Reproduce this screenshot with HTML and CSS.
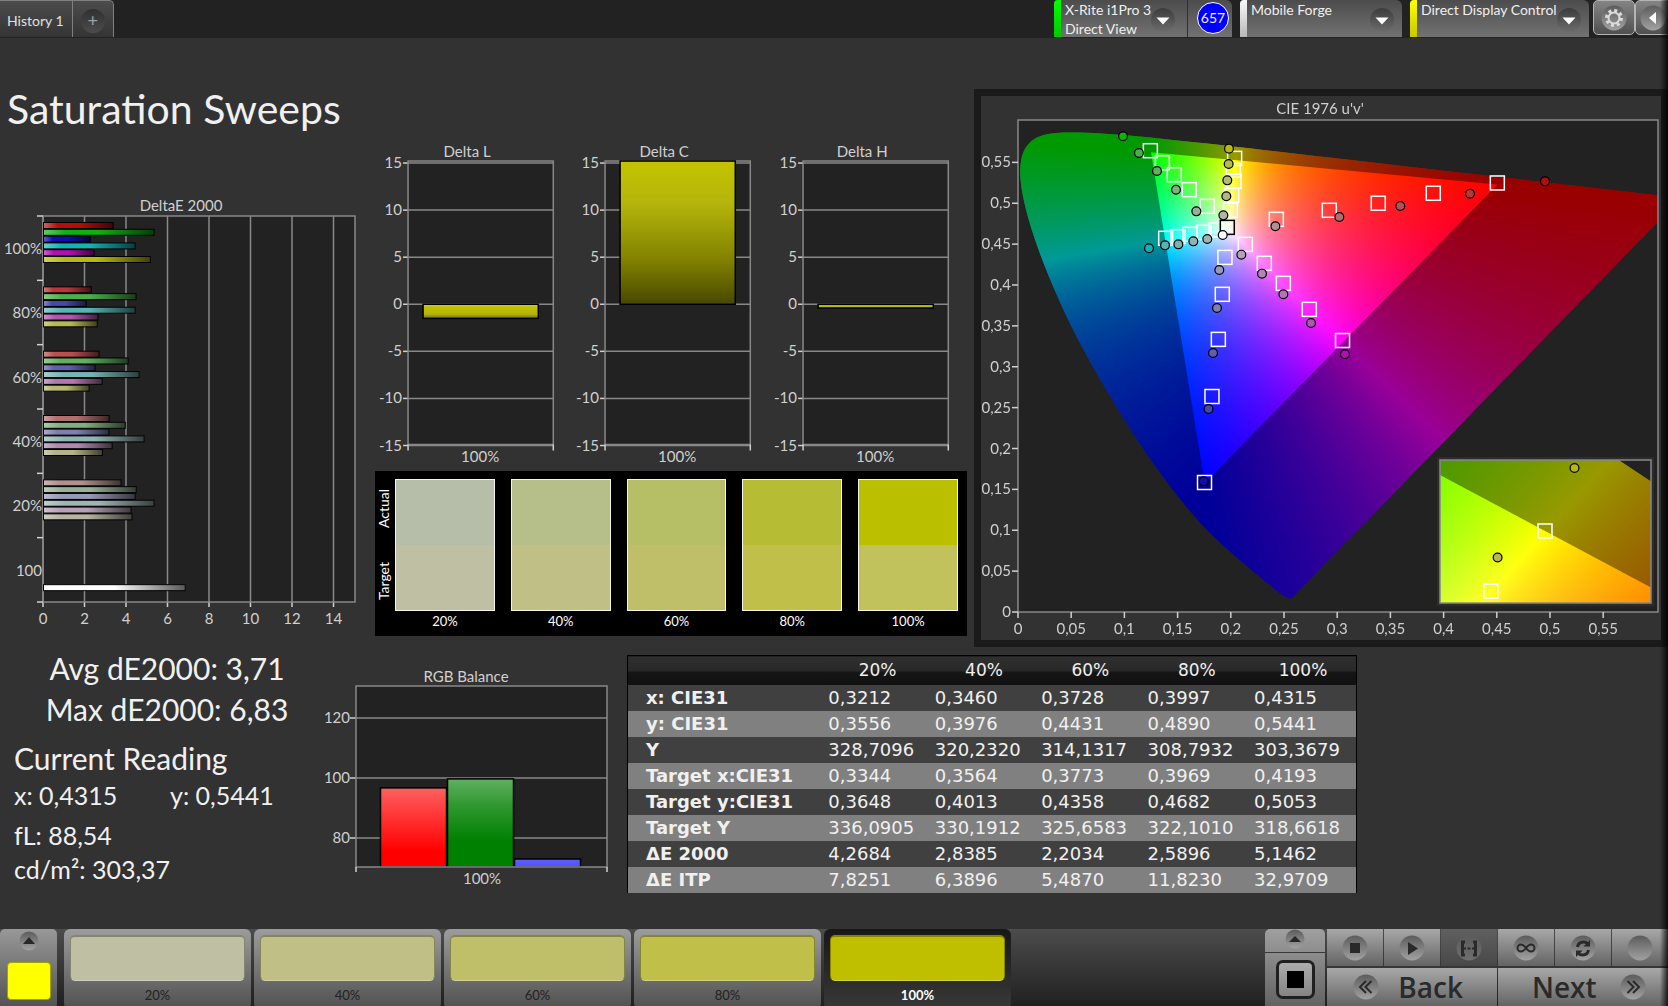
FILE: index.html
```html
<!DOCTYPE html>
<html lang="en">
  <head>
    <meta charset="UTF-8" />
    <meta name="viewport" content="width=device-width, initial-scale=1.0" />
    <title>Saturation Sweeps</title>
    <link rel="stylesheet" href="styles.css">
  </head>
  <body>
    <header class="topbar">
      <nav class="tabs">
        <a class="tab" href="#history-1">History 1</a>
        <button class="tab tab-add" type="button" aria-label="Add history"><span>+</span></button>
      </nav>

      <div class="devices">
        <div class="device meter">
          <span class="strip green"></span>
          <div class="device-text">
            <label for="meterMode">X-Rite i1Pro 3</label>
            <select id="meterMode"><option>Direct View</option></select>
          </div>
          <svg class="drop" viewBox="0 0 26 26"><circle cx="13" cy="13" r="12" /><path d="M6.500 10.500h13l-6.500 7z" /></svg>
          <div class="reading-count"><span>657</span></div>
        </div>
        <div class="device source">
          <span class="strip white"></span>
          <div class="device-text">
            <select aria-label="Source"><option>Mobile Forge</option></select>
          </div>
          <svg class="drop" viewBox="0 0 26 26"><circle cx="13" cy="13" r="12" /><path d="M6.500 10.500h13l-6.500 7z" /></svg>
        </div>
        <div class="device display">
          <span class="strip yellow"></span>
          <div class="device-text">
            <select aria-label="Display"><option>Direct Display Control</option></select>
          </div>
          <svg class="drop" viewBox="0 0 26 26"><circle cx="13" cy="13" r="12" /><path d="M6.500 10.500h13l-6.500 7z" /></svg>
        </div>
        <button class="tool" type="button" aria-label="Settings">
          <svg viewBox="0 0 26 26">
            <circle class="well" cx="13" cy="13" r="12.500" />
            <circle class="gear-teeth" cx="13" cy="13" r="7.500" />
            <circle class="gear-ring" cx="13" cy="13" r="5.500" />
          </svg>
        </button>
        <button class="tool collapse" type="button" aria-label="Collapse">
          <svg viewBox="0 0 26 26"><circle class="well" cx="13" cy="13" r="12.500" /><path class="light" d="M16 7v12l-7-6z" /></svg>
        </button>
      </div>
    </header>

    <main class="dashboard">
      <div class="top-row">
        <section class="col-left">
          <h1>Saturation Sweeps</h1>
          <svg id="deltaE" class="chart" viewBox="0 0 375 450"></svg>
        </section>

        <section class="col-mid">
          <div class="delta-charts">
            <svg id="deltaL" class="chart" viewBox="0 0 197 332"></svg>
            <svg id="deltaC" class="chart" viewBox="0 0 197 332"></svg>
            <svg id="deltaH" class="chart" viewBox="0 0 197 332"></svg>
          </div>
          <div class="compare">
            <div class="compare-side"><span>Actual</span><span>Target</span></div>
            <div class="pairs">
              <figure><div class="pair s20"><i></i><i></i></div><figcaption>20%</figcaption></figure>
              <figure><div class="pair s40"><i></i><i></i></div><figcaption>40%</figcaption></figure>
              <figure><div class="pair s60"><i></i><i></i></div><figcaption>60%</figcaption></figure>
              <figure><div class="pair s80"><i></i><i></i></div><figcaption>80%</figcaption></figure>
              <figure><div class="pair s100"><i></i><i></i></div><figcaption>100%</figcaption></figure>
            </div>
          </div>
        </section>

        <section class="cie">
          <canvas id="cieFill" width="680" height="544"></canvas>
          <svg id="ciePlot" class="chart" viewBox="0 0 680 544"></svg>
        </section>
      </div>

      <div class="bottom-row">
        <section class="stats">
          <div class="totals">
            <p>Avg dE2000: 3,71</p>
            <p>Max dE2000: 6,83</p>
          </div>
          <h2>Current Reading</h2>
          <p class="xy"><span>x: 0,4315</span><span>y: 0,5441</span></p>
          <p class="lum">fL: 88,54</p>
          <p class="lum">cd/m²: 303,37</p>
        </section>

        <svg id="rgbBalance" class="chart" viewBox="0 0 307 234"></svg>

        <table class="results">
          <thead>
            <tr><th></th><th>20%</th><th>40%</th><th>60%</th><th>80%</th><th>100%</th></tr>
          </thead>
          <tbody>
            <tr><th>x: CIE31</th><td>0,3212</td><td>0,3460</td><td>0,3728</td><td>0,3997</td><td>0,4315</td></tr>
            <tr><th>y: CIE31</th><td>0,3556</td><td>0,3976</td><td>0,4431</td><td>0,4890</td><td>0,5441</td></tr>
            <tr><th>Y</th><td>328,7096</td><td>320,2320</td><td>314,1317</td><td>308,7932</td><td>303,3679</td></tr>
            <tr><th>Target x:CIE31</th><td>0,3344</td><td>0,3564</td><td>0,3773</td><td>0,3969</td><td>0,4193</td></tr>
            <tr><th>Target y:CIE31</th><td>0,3648</td><td>0,4013</td><td>0,4358</td><td>0,4682</td><td>0,5053</td></tr>
            <tr><th>Target Y</th><td>336,0905</td><td>330,1912</td><td>325,6583</td><td>322,1010</td><td>318,6618</td></tr>
            <tr><th>ΔE 2000</th><td>4,2684</td><td>2,8385</td><td>2,2034</td><td>2,5896</td><td>5,1462</td></tr>
            <tr><th>ΔE ITP</th><td>7,8251</td><td>6,3896</td><td>5,4870</td><td>11,8230</td><td>32,9709</td></tr>
          </tbody>
        </table>
      </div>
    </main>

    <footer class="bottombar">
      <button class="current" type="button" aria-label="Choose colour">
        <svg class="up" viewBox="0 0 20 20"><circle class="well" cx="10" cy="10" r="9.500" /><path d="M4 13h12l-6-7z" /></svg>
        <i></i>
      </button>

      <div class="patches">
        <button class="patch p20" type="button"><i></i>20%</button>
        <button class="patch p40" type="button"><i></i>40%</button>
        <button class="patch p60" type="button"><i></i>60%</button>
        <button class="patch p80" type="button"><i></i>80%</button>
        <button class="patch p100 active" type="button"><i></i>100%</button>
      </div>

      <div class="transport">
        <div class="pattern">
          <button class="pattern-up" type="button" aria-label="Patterns">
            <svg class="up" viewBox="0 0 20 20"><circle class="well" cx="10" cy="10" r="9.500" /><path d="M4 13h12l-6-6z" /></svg>
          </button>
          <button class="pattern-window" type="button" aria-label="Window pattern"><i></i></button>
        </div>
        <div class="keys">
          <button type="button" aria-label="Stop">
            <svg viewBox="0 0 26 26"><circle class="well" cx="13" cy="13" r="12.500" /><path d="M8 8h10v10H8z" /></svg>
          </button>
          <button type="button" aria-label="Play">
            <svg viewBox="0 0 26 26"><circle class="well" cx="13" cy="13" r="12.500" /><path d="M9 7v13l10-6.500z" /></svg>
          </button>
          <button class="active" type="button" aria-label="Read range">
            <svg viewBox="0 0 26 26"><circle class="well" cx="13" cy="13" r="12.500" /><path class="line thick" d="M9 7H6.500v13H9M17 7h2.500v13H17" /><path class="line" d="M8 13.500h2m1.500 0h3m1.500 0h2" /></svg>
          </button>
          <button type="button" aria-label="Continuous">
            <svg viewBox="0 0 26 26"><circle class="well" cx="13" cy="13" r="12.500" /><path class="line" d="M13 13c-2-2.700-3.500-3.500-5-3.500a3.500 3.500 0 0 0 0 7c1.500 0 3-.8 5-3.500s3.500-3.500 5-3.500a3.500 3.500 0 0 1 0 7c-1.500 0-3-.8-5-3.500z" /></svg>
          </button>
          <button type="button" aria-label="Repeat">
            <svg viewBox="0 0 26 26"><circle class="well" cx="13" cy="13" r="12.500" /><path class="line thick" d="M7.500 12c.5-3 3-5 6-5 1.500 0 3 .6 4 1.800M18.500 15c-.5 3-3 5-6 5-1.500 0-3-.6-4-1.800" /><path d="M20 5v6.500h-6.500zM6 22v-6.500h6.500z" /></svg>
          </button>
          <button type="button" aria-label="Record">
            <svg viewBox="0 0 26 26"><circle class="well" cx="13" cy="13" r="12.500" /></svg>
          </button>
          <button class="step" type="button">
            <svg viewBox="0 0 26 26"><circle class="well" cx="13" cy="13" r="12.500" /><path class="line" d="M13 7l-6 6 6 6M18.500 7l-6 6 6 6" /></svg>
            Back
          </button>
          <button class="step" type="button">
            Next
            <svg viewBox="0 0 26 26"><circle class="well" cx="13" cy="13" r="12.500" /><path class="line" d="M7.500 7l6 6-6 6M13 7l6 6-6 6" /></svg>
          </button>
        </div>
      </div>
    </footer>

    <svg class="defs" width="0" height="0">
      <defs>
        <linearGradient id="wellFill" x1="0" y1="0" x2="0" y2="1">
          <stop offset="0" stop-color="#5c5c5c" />
          <stop offset="1" stop-color="#a2a2a2" />
        </linearGradient>
        <linearGradient id="dropFill" x1="0" y1="0" x2="0" y2="1">
          <stop offset="0" stop-color="#3c3c3c" />
          <stop offset="1" stop-color="#6c6c6c" />
        </linearGradient>
        <linearGradient id="barShade" x1="0" y1="0" x2="1" y2="0">
          <stop offset="0" stop-color="#fff" stop-opacity="0.35" />
          <stop offset="0.2" stop-color="#fff" stop-opacity="0" />
          <stop offset="0.5" stop-color="#000" stop-opacity="0" />
          <stop offset="1" stop-color="#000" stop-opacity="0.65" />
        </linearGradient>
        <linearGradient id="columnShade" x1="0" y1="0" x2="0" y2="1">
          <stop offset="0" stop-color="#c4c400" />
          <stop offset="0.3" stop-color="#b4b40c" />
          <stop offset="0.7" stop-color="#808000" />
          <stop offset="1" stop-color="#484800" />
        </linearGradient>
        <linearGradient id="lowShade" x1="0" y1="0" x2="0" y2="1">
          <stop offset="0" stop-color="#d8d840" />
          <stop offset="0.2" stop-color="#c0c000" />
          <stop offset="0.7" stop-color="#b4b40c" />
          <stop offset="1" stop-color="#6c6c10" />
        </linearGradient>
        <linearGradient id="redShade" x1="0" y1="0" x2="0" y2="1">
          <stop offset="0" stop-color="#ff6060" />
          <stop offset="0.8" stop-color="#ff0000" />
        </linearGradient>
        <linearGradient id="greenShade" x1="0" y1="0" x2="0" y2="1">
          <stop offset="0" stop-color="#60b060" />
          <stop offset="0.3" stop-color="#309830" />
          <stop offset="0.7" stop-color="#008000" />
        </linearGradient>
        <linearGradient id="blueShade" x1="0" y1="0" x2="0" y2="1">
          <stop offset="0" stop-color="#6060ff" />
          <stop offset="1" stop-color="#5050ff" />
        </linearGradient>
      </defs>
    </svg>

    <script src="charts.js"></script>
  </body>
</html>
```

FILE: styles.css
```css
* {
  margin: 0;
  padding: 0;
  box-sizing: border-box;
}

body {
  display: flex;
  flex-direction: column;
  min-height: 100vh;
  overflow-x: hidden;
  background: #323232;
  color: #f0f0f0;
  font-family: Lato, "Noto Sans", sans-serif;
  font-size: 14px;
}

/* Shadow along the right window edge */
body::after {
  content: "";
  position: fixed;
  top: 0;
  right: 0;
  bottom: 0;
  width: 8px;
  background: linear-gradient(90deg, rgba(0, 0, 0, 0), rgba(0, 0, 0, 0.8));
  pointer-events: none;
}

button,
select {
  font: inherit;
  color: inherit;
  border: none;
  background: none;
  cursor: pointer;
}

.defs {
  position: absolute;
}

.well {
  fill: url(#wellFill);
}

/* Top bar */
.topbar {
  display: flex;
  justify-content: space-between;
  height: 38px;
  background: #222;
  overflow: hidden;
}

.tabs {
  display: flex;
  height: 37px;
}

.tab {
  display: flex;
  align-items: center;
  padding: 2px 8px 0 7px;
  border-top: 1px solid #808080;
  border-right: 1px solid #808080;
  background: linear-gradient(#4c4c4c, #343434);
  color: #e0e0e0;
  text-decoration: none;
}

.tab-add {
  padding: 4px 8px 0;
  border-radius: 0 5px 0 0;
}

.tab-add span {
  width: 24px;
  height: 24px;
  border-radius: 50%;
  background: linear-gradient(#303030, #4c4c4c);
  color: #a0a0a0;
  font-size: 18px;
  line-height: 22px;
}

.devices {
  display: flex;
  height: 37px;
  margin-right: -9px;
}

.device {
  display: flex;
  align-items: center;
  margin-right: 8px;
  border-radius: 4px 6px 0 0;
  background: linear-gradient(#4c4c4c, #727272);
  overflow: hidden;
}

.meter {
  width: 178px;
}

.source {
  width: 162px;
}

.display {
  width: 179px;
  margin-right: 4px;
}

.strip {
  flex: none;
  width: 7px;
  height: 37px;
}

.strip.green {
  background: linear-gradient(#00ff00, #00c800);
}

.strip.white {
  background: linear-gradient(#fafafa, #b8b8b8);
}

.strip.yellow {
  background: linear-gradient(#ffff00, #c8c800);
}

.device-text {
  display: flex;
  flex-direction: column;
  flex: 1;
  align-self: flex-start;
  min-width: 0;
  padding-left: 4px;
  line-height: 19px;
  white-space: nowrap;
}

.device-text select {
  width: 100%;
  height: 19px;
  appearance: none;
  line-height: 19px;
}

.drop {
  flex: none;
  width: 26px;
  height: 26px;
  margin: 2px 7px 0 0;
}

.meter .drop {
  margin-right: 11px;
}

.display .drop {
  margin-left: -2px;
}

.drop circle {
  fill: url(#dropFill);
}

.drop path {
  fill: #fff;
}

.reading-count {
  flex: none;
  width: 45px;
  height: 37px;
  padding: 2px 0 0 9px;
  border-left: 1px solid #303030;
}

.reading-count span {
  display: block;
  width: 32px;
  height: 32px;
  border: 1px solid #fff;
  border-radius: 50%;
  background: #0000ff;
  font-size: 14px;
  line-height: 30px;
  text-align: center;
}

.tool {
  flex: none;
  width: 42px;
  height: 35px;
  border: 1px solid #b4b4b4;
  border-radius: 5px;
  background: linear-gradient(#848484, #505050);
}

.tool svg {
  display: block;
  width: 26px;
  height: 26px;
  margin: 0 auto;
}

.tool.collapse svg {
  margin: 0 4px;
}

.gear-teeth {
  fill: none;
  stroke: #dcdcdc;
  stroke-width: 3;
  stroke-dasharray: 3 2.89;
}

.gear-ring {
  fill: none;
  stroke: #dcdcdc;
  stroke-width: 2;
}

.light {
  fill: #fff;
}

/* Dashboard */
.dashboard {
  flex: 1;
  padding-top: 51px;
}

.top-row {
  display: grid;
  grid-template-columns: minmax(0, 375fr) minmax(0, 599fr) minmax(0, 694fr);
}

h1 {
  padding-left: 7px;
  margin-bottom: 61px;
  font-size: 41px;
  font-weight: 400;
  line-height: 40px;
  white-space: nowrap;
}

.chart {
  display: block;
  width: 100%;
  height: auto;
}

.chart text {
  fill: #d0d0d0;
  font-size: 15px;
}

.plot-bg {
  fill: #222;
}

.frame {
  fill: none;
  stroke: #888;
}

.grid {
  stroke: #888;
}

.tick {
  stroke: #d0d0d0;
}

.col-mid {
  padding: 49px 7px 0 0;
}

.delta-charts {
  display: grid;
  grid-template-columns: repeat(3, 1fr);
}

/* Actual / target swatches */
.compare {
  display: flex;
  padding: 8px 9px 7px 0;
  background: #000;
  color: #fff;
}

.compare-side {
  display: flex;
  flex-direction: column;
  justify-content: space-between;
  width: 20px;
  height: 132px;
  padding: 10px 0;
}

.compare-side span {
  writing-mode: vertical-rl;
  transform: rotate(180deg);
}

.pairs {
  display: grid;
  grid-template-columns: repeat(5, 1fr);
  column-gap: 16px;
  flex: 1;
}

.pairs figcaption {
  padding-top: 2px;
  font-size: 13px;
  line-height: 16px;
  text-align: center;
}

.pair {
  height: 132px;
  border: 1px solid #f4f4e8;
}

.pair i {
  display: block;
  height: 65px;
}

.s20 i { background: #b6beaa; }
.s20 i + i { background: #bfbfa4; }
.s40 i { background: #b6bf8a; }
.s40 i + i { background: #bfbf86; }
.s60 i { background: #b6be66; }
.s60 i + i { background: #bfbf6a; }
.s80 i { background: #b6bd34; }
.s80 i + i { background: #bfbf4a; }
.s100 i { background: #babf00; }
.s100 i + i { background: #c2c25c; }

/* CIE diagram: the canvas fill and the marks share one cell */
.cie {
  display: grid;
  align-self: start;
  border: 7px solid #1a1a1a;
}

.cie canvas,
.cie svg {
  grid-area: 1 / 1;
  width: 100%;
  height: auto;
}

.target {
  fill: none;
  stroke: #fff;
  stroke-width: 1.5;
}

.target.white-point {
  stroke: #000;
}

.measured {
  stroke: #000;
  stroke-width: 1.2;
}

/* Bottom row */
.bottom-row {
  display: grid;
  grid-template-columns: minmax(0, 320fr) minmax(0, 307fr) minmax(0, 730fr) minmax(0, 311fr);
  align-items: start;
  padding-top: 8px;
}

.stats {
  padding-left: 14px;
  margin-top: -7px;
  font-size: 25px;
}

.totals {
  width: 334px;
  margin: 0 0 8px -14px;
  font-size: 30px;
  line-height: 41px;
  text-align: center;
}

.stats h2 {
  font-size: 30px;
  font-weight: 400;
  line-height: 40px;
}

.xy {
  display: flex;
  line-height: 34px;
  margin-bottom: 6px;
}

.xy span {
  flex: 0 0 156px;
}

.lum {
  line-height: 34px;
}

.results {
  width: 100%;
  border: 1px solid #000;
  border-bottom: none;
  border-collapse: collapse;
  table-layout: fixed;
  font-family: "DejaVu Sans", sans-serif;
  font-size: 18px;
  line-height: 22px;
}

.results thead th {
  height: 29px;
  background: linear-gradient(#303030, #282828 50%, #161616 51%, #101010);
  font-size: 17px;
  font-weight: 400;
}

.results thead th:first-child {
  width: 27%;
}

.results tbody tr {
  height: 26px;
  background: #404040;
}

.results tbody tr:nth-child(even) {
  background: #808080;
}

.results tbody th {
  padding-left: 18px;
  text-align: left;
  white-space: nowrap;
}

.results td {
  padding-left: 4px;
}

/* Bottom bar */
.bottombar {
  display: grid;
  grid-template-columns: 57px minmax(0, 1fr) auto;
  height: 77px;
  background: linear-gradient(#4c4c4c, #202020);
  overflow: hidden;
}

.current {
  display: flex;
  flex-direction: column;
  align-items: center;
  padding-top: 2px;
  border-radius: 5px;
  background: linear-gradient(#989898, #505050);
}

.current i {
  width: 44px;
  height: 38px;
  margin-top: 11px;
  border: 1px solid #a0a000;
  border-radius: 4px;
  background: #ffff00;
}

.up {
  width: 20px;
  height: 20px;
}

.up path {
  fill: #282828;
}

.patches {
  display: grid;
  grid-template-columns: repeat(5, minmax(0, 187px));
  column-gap: 3px;
  padding-left: 7px;
}

.patch {
  padding: 6px 6px 0;
  border-radius: 6px;
  background: linear-gradient(#9c9c9c, #505050);
  color: #222;
  font-size: 13px;
  line-height: 28px;
}

.patch i {
  display: block;
  height: 46px;
  border: 1px solid rgba(0, 0, 0, 0.3);
  border-top-width: 2px;
  border-bottom-color: rgba(255, 255, 255, 0.3);
  border-radius: 5px;
}

.patch.active {
  background: linear-gradient(#181818, #383838);
  color: #fff;
  font-weight: 700;
}

.p20 i { background: #bfbfa4; }
.p40 i { background: #bfbf86; }
.p60 i { background: #bfbf6a; }
.p80 i { background: #bfbf4a; }
.p100 i { background: #bfbf00; }

.transport {
  display: flex;
  gap: 2px;
}

.pattern {
  display: flex;
  flex-direction: column;
  width: 60px;
  border-radius: 5px 5px 0 0;
  background: linear-gradient(#a0a0a0, #606060);
  overflow: hidden;
}

.pattern-up {
  height: 24px;
  border-bottom: 1px solid #383838;
}

.pattern-window {
  display: grid;
  place-items: center;
  align-self: center;
  width: 39px;
  height: 39px;
  margin-top: 7px;
  border: 3px solid #202020;
  border-radius: 7px;
  background: linear-gradient(#acacac, #848484);
}

.pattern-window i {
  width: 17px;
  height: 17px;
  background: #000;
}

.keys {
  display: grid;
  grid-template-columns: repeat(6, 56px);
  grid-template-rows: 37px 38px;
  gap: 2px 1px;
}

.keys button {
  display: flex;
  align-items: center;
  justify-content: center;
  background: linear-gradient(#a8a8a8, #646464);
  color: #2a2a2a;
}

.keys button.active {
  background: linear-gradient(#606060, #484848);
}

.keys button.active .well {
  opacity: 0.4;
}

.keys svg {
  width: 26px;
  height: 26px;
}

.keys path {
  fill: #2a2a2a;
}

.keys .line {
  fill: none;
  stroke: #2a2a2a;
  stroke-width: 2;
}

.keys .thick {
  stroke-width: 3;
}

.keys .step {
  grid-column: span 3;
  justify-content: space-between;
  padding: 0 34px 0 26px;
  font-family: "Open Sans", sans-serif;
  font-size: 28px;
  font-weight: 600;
  line-height: 38px;
}

.keys .step:last-child {
  padding: 0 22px 0 34px;
}
```

FILE: charts.js
```javascript
const SVG_NS = "http://www.w3.org/2000/svg";

function add(parent, name, attrs, text) {
  const el = document.createElementNS(SVG_NS, name);
  for (const key in attrs) el.setAttribute(key, attrs[key]);
  if (text !== undefined) el.textContent = text;
  parent.appendChild(el);
  return el;
}

function line(svg, cls, x1, y1, x2, y2) {
  add(svg, "line", { class: cls, x1, y1, x2, y2, "stroke-width": 1.5 });
}

function label(svg, x, y, anchor, text) {
  add(svg, "text", { x, y, "text-anchor": anchor }, text);
}

function box(svg, cls, x, y, width, height) {
  add(svg, "rect", { class: cls, x, y, width, height, "stroke-width": 1.5 });
}

// One row per saturation: red, green, blue, cyan, magenta, yellow
const colors = {
  100: ["#b80c0c", "#10b010", "#1010a8", "#10b4b4", "#b010b0", "#b8b810"],
  80: ["#b83838", "#48b048", "#4848a8", "#58b4b4", "#b058b0", "#b8b850"],
  60: ["#b85050", "#60b060", "#6060a8", "#78b4b4", "#b078b0", "#b8b870"],
  40: ["#b07070", "#80b080", "#8080b0", "#90b4b4", "#b088b0", "#b4b488"],
  20: ["#b09090", "#98b098", "#9898b8", "#a0b4b4", "#b8a0b8", "#b4b4a0"],
};
const levels = [100, 80, 60, 40, 20];

// DeltaE 2000 bars
function drawDeltaE() {
  const svg = document.getElementById("deltaE");
  const values = {
    100: [3.36, 5.33, 2.25, 4.42, 2.44, 5.15],
    80: [2.3, 4.46, 2.06, 4.42, 2.63, 2.59],
    60: [2.68, 4.08, 2.49, 4.61, 2.83, 2.2],
    40: [3.16, 3.94, 3.16, 4.85, 3.31, 2.84],
    20: [3.74, 4.47, 4.42, 5.33, 4.22, 4.27],
  };
  const left = 43, right = 355, top = 26, bottom = 412;
  const unit = 20.75;
  const group = (bottom - top) / 6;

  label(svg, 181, 21, "middle", "DeltaE 2000");
  box(svg, "plot-bg", left, top, right - left, bottom - top);
  for (let v = 0; v <= 14; v += 2) {
    const x = left + v * unit;
    line(svg, "grid", x, top, x, bottom);
    line(svg, "tick", x, bottom, x, bottom + 5);
    label(svg, x, 434, "middle", v);
  }
  box(svg, "frame", left, top, right - left, bottom - top);
  for (let i = 0; i <= 6; i++) {
    line(svg, "tick", left - 6, top + i * group, left, top + i * group);
  }

  function bar(y, value, color) {
    const size = { x: left + 0.5, y, width: value * unit, height: 6 };
    add(svg, "rect", { ...size, fill: color });
    add(svg, "rect", { ...size, fill: "url(#barShade)", stroke: "#000" });
  }

  levels.forEach((level, i) => {
    const y = top + i * group;
    label(svg, 42, y + 38, "end", level + "%");
    values[level].forEach((value, n) => bar(y + 6.5 + n * 6.8, value, colors[level][n]));
  });
  label(svg, 42, top + 5 * group + 38, "end", "100");
  bar(top + 5 * group + 47, 6.83, "#ffffff");
}

// Delta L / C / H
function drawDelta(id, title, value, fill) {
  const svg = document.getElementById(id);
  const left = 33, right = 178, top = 23, bottom = 306;
  const y = (v) => 166 - v * 9.4;

  label(svg, 92, 19, "middle", title);
  box(svg, "plot-bg", left, top, right - left, bottom - top);
  for (let v = -15; v <= 15; v += 5) {
    line(svg, "grid", left, y(v), right, y(v));
    line(svg, "tick", left - 5, y(v), left, y(v));
    label(svg, 27, y(v) + 5, "end", v);
  }
  box(svg, "frame", left, top, right - left, bottom - top);
  line(svg, "tick", left, bottom, left, bottom + 6);
  line(svg, "tick", right, bottom, right, bottom + 6);

  const y1 = Math.max(y(Math.max(value, 0)), top);
  const y2 = y(Math.min(value, 0));
  add(svg, "rect", { x: 48, y: y1, width: 115, height: y2 - y1, fill, stroke: "#000", "stroke-width": 1.5 });
  label(svg, 105, 323, "middle", "100%");
}

// RGB balance
function drawRgb() {
  const svg = document.getElementById("rgbBalance");
  const left = 36, right = 287, top = 31, bottom = 212;
  const y = (v) => 123 - (v - 100) * 3;

  label(svg, 146, 27, "middle", "RGB Balance");
  box(svg, "plot-bg", left, top, right - left, bottom - top);
  for (const v of [80, 100, 120]) {
    line(svg, "grid", left, y(v), right, y(v));
    line(svg, "tick", left - 6, y(v), left, y(v));
    label(svg, 30, y(v) + 5, "end", v);
  }
  const bars = [[96.7, "url(#redShade)"], [99.7, "url(#greenShade)"], [73, "url(#blueShade)"]];
  bars.forEach(([v, fill], i) => {
    add(svg, "rect", { x: 60.5 + i * 67, y: y(v), width: 66, height: bottom - y(v), fill, stroke: "#000", "stroke-width": 1.5 });
  });
  box(svg, "frame", left, top, right - left, bottom - top);
  line(svg, "tick", left, bottom, left, bottom + 5);
  line(svg, "tick", right, bottom, right, bottom + 5);
  label(svg, 162, 229, "middle", "100%");
}

// Spectral locus, CIE 1931 xy
const locus = [
  [0.1741, 0.005], [0.1714, 0.0051], [0.1689, 0.0069], [0.1644, 0.0109], [0.1566, 0.0177],
  [0.144, 0.0297], [0.1355, 0.0399], [0.1241, 0.0578], [0.1096, 0.0868], [0.0913, 0.1327],
  [0.0687, 0.2007], [0.0454, 0.295], [0.0235, 0.4127], [0.0082, 0.5384], [0.0039, 0.6548],
  [0.0139, 0.7502], [0.0389, 0.812], [0.0743, 0.8338], [0.1142, 0.8262], [0.1547, 0.8059],
  [0.1929, 0.7816], [0.2296, 0.7543], [0.3016, 0.6923], [0.3731, 0.6245], [0.4441, 0.5547],
  [0.5125, 0.4866], [0.5752, 0.4242], [0.627, 0.3725], [0.6658, 0.334], [0.6915, 0.3083],
  [0.726, 0.274], [0.7347, 0.2653],
];
const rec709 = [[0.64, 0.33], [0.3, 0.6], [0.15, 0.06]];

function xyToUv([x, y]) {
  const d = -2 * x + 12 * y + 3;
  return [(4 * x) / d, (9 * y) / d];
}

function uvToXy([u, v]) {
  const d = 6 * u - 16 * v + 12;
  return [(9 * u) / d, (4 * v) / d];
}

// Linear light, scaled so the strongest channel is full
function xyToRgb([x, y]) {
  const z = 1 - x - y;
  const rgb = [
    3.2406 * x - 1.5372 * y - 0.4986 * z,
    -0.9689 * x + 1.8758 * y + 0.0415 * z,
    0.0557 * x - 0.204 * y + 1.057 * z,
  ].map((c) => Math.max(c, 0));
  const max = Math.max(...rgb);
  return rgb.map((c) => (255 * c) / max);
}

function polygon(points) {
  const path = new Path2D();
  // Quadratic midpoints keep the curved part of the locus smooth
  const mid = (a, b) => [(a[0] + b[0]) / 2, (a[1] + b[1]) / 2];
  if (points.length === 3) {
    points.forEach((p) => path.lineTo(...p));
  } else {
    path.moveTo(...points[0]);
    for (let i = 1; i < points.length - 1; i++) {
      path.quadraticCurveTo(...points[i], ...mid(points[i], points[i + 1]));
    }
    path.lineTo(...points[points.length - 1]);
  }
  path.closePath();
  return path;
}

// Fills an area with chromaticity colours, dimmed outside Rec. 709
function paintGamut(ctx, area, toPixel, pixelToXy) {
  const buffer = document.createElement("canvas");
  buffer.width = area.w;
  buffer.height = area.h;
  const bctx = buffer.getContext("2d");
  const image = bctx.createImageData(area.w, area.h);
  for (let j = 0; j < area.h; j++) {
    for (let i = 0; i < area.w; i++) {
      const rgb = xyToRgb(pixelToXy(area.x + i, area.y + j));
      image.data.set([...rgb, 255], (j * area.w + i) * 4);
    }
  }
  bctx.putImageData(image, 0, 0);

  ctx.fillStyle = "#222";
  ctx.fillRect(area.x, area.y, area.w, area.h);
  ctx.save();
  ctx.beginPath();
  ctx.rect(area.x, area.y, area.w, area.h);
  ctx.clip();
  ctx.clip(polygon(locus.map(toPixel)));
  ctx.drawImage(buffer, area.x, area.y);
  ctx.fillStyle = "rgba(0, 0, 0, 0.4)";
  ctx.fillRect(area.x, area.y, area.w, area.h);
  ctx.clip(polygon(rec709.map(toPixel)));
  ctx.drawImage(buffer, area.x, area.y);
  ctx.restore();
}

// u'v' pairs, strongest saturation first
const targets = [
  [[0.4505, 0.5248], [0.3903, 0.5122], [0.3386, 0.5], [0.2926, 0.4914], [0.2428, 0.4803]],
  [[0.1244, 0.5643], [0.1357, 0.5496], [0.1469, 0.535], [0.161, 0.5166], [0.1779, 0.4962]],
  [[0.1753, 0.1584], [0.1823, 0.2636], [0.1883, 0.3335], [0.192, 0.3886], [0.1945, 0.4338]],
  [[0.1388, 0.4571], [0.1504, 0.4591], [0.1617, 0.462], [0.1748, 0.4644], [0.1861, 0.4673]],
  [[0.305, 0.3321], [0.2738, 0.3702], [0.2494, 0.402], [0.2315, 0.4265], [0.2137, 0.4497]],
  [[0.2036, 0.5549], [0.2024, 0.5403], [0.203, 0.5268], [0.2008, 0.5097], [0.1996, 0.4913]],
];
const readings = [
  [[0.4953, 0.5268], [0.4248, 0.5117], [0.3593, 0.4966], [0.302, 0.4832], [0.2419, 0.4718]],
  [[0.0987, 0.5819], [0.1137, 0.5615], [0.1306, 0.5394], [0.1485, 0.5166], [0.1676, 0.4901]],
  [[0.1745, 0.1599], [0.1791, 0.2483], [0.1833, 0.3168], [0.187, 0.3719], [0.1892, 0.4183]],
  [[0.1231, 0.4449], [0.1382, 0.4485], [0.1507, 0.4497], [0.1648, 0.4534], [0.1779, 0.4563]],
  [[0.3073, 0.3152], [0.2754, 0.3535], [0.2494, 0.3886], [0.2293, 0.4139], [0.2099, 0.4371]],
  [[0.1983, 0.5668], [0.198, 0.548], [0.1967, 0.528], [0.1958, 0.5085], [0.193, 0.4852]],
];

function drawCie() {
  const svg = document.getElementById("ciePlot");
  const ctx = document.getElementById("cieFill").getContext("2d");
  const left = 37, right = 677, top = 24, bottom = 516;
  const kx = 1064, ky = 817.5;
  const px = ([u, v]) => [left + u * kx, bottom - v * ky];

  paintGamut(
    ctx,
    { x: left, y: top, w: right - left, h: bottom - top },
    (xy) => px(xyToUv(xy)),
    (x, y) => uvToXy([(x - left) / kx, (bottom - y) / ky])
  );

  label(svg, 339, 18, "middle", "CIE 1976 u'v'");
  box(svg, "frame", left, top, right - left, bottom - top);
  for (let i = 0; i <= 11; i++) {
    const text = String(i * 5 / 100).replace(".", ",");
    const [x, y] = px([i * 0.05, i * 0.05]);
    line(svg, "tick", x, bottom, x, bottom + 6);
    label(svg, x, 538, "middle", text);
    line(svg, "tick", left - 6, y, left, y);
    label(svg, 30, y + 5, "end", text);
  }

  function square([x, y], cls = "") {
    add(svg, "rect", { class: "target " + cls, x: x - 7, y: y - 7, width: 14, height: 14 });
  }
  function dot([cx, cy], fill) {
    add(svg, "circle", { class: "measured", cx, cy, r: 4.4, fill });
  }

  targets.forEach((set) => set.forEach((p) => square(px(p))));
  square(px([0.1967, 0.4705]), "white-point");
  readings.forEach((set, n) => set.forEach((p, i) => dot(px(p), colors[levels[i]][n])));
  dot(px([0.1924, 0.4612]), "#fff");

  // Detail window in xy, centred on the selected target
  const area = { x: 459, y: 364, w: 211, h: 143 };
  const cx = 564, cy = 435, zx = 2418, zy = 1624;
  const detail = ([x, y]) => [cx + (x - 0.4193) * zx, cy - (y - 0.5053) * zy];
  ctx.fillStyle = "#2c2c2c";
  ctx.fillRect(area.x - 3, area.y - 3, area.w + 6, area.h + 6);
  paintGamut(ctx, area, detail, (x, y) => [0.4193 + (x - cx) / zx, 0.5053 - (y - cy) / zy]);
  box(svg, "frame", area.x, area.y, area.w, area.h);
  square(detail([0.4193, 0.5053]));
  square(detail([0.3969, 0.4682]));
  dot(detail([0.4315, 0.5441]), colors[100][5]);
  dot(detail([0.3997, 0.489]), colors[80][5]);
}

drawDeltaE();
drawDelta("deltaL", "Delta L", -1.5, "url(#lowShade)");
drawDelta("deltaC", "Delta C", 20, "url(#columnShade)");
drawDelta("deltaH", "Delta H", -0.4, "url(#lowShade)");
drawRgb();
drawCie();
```
